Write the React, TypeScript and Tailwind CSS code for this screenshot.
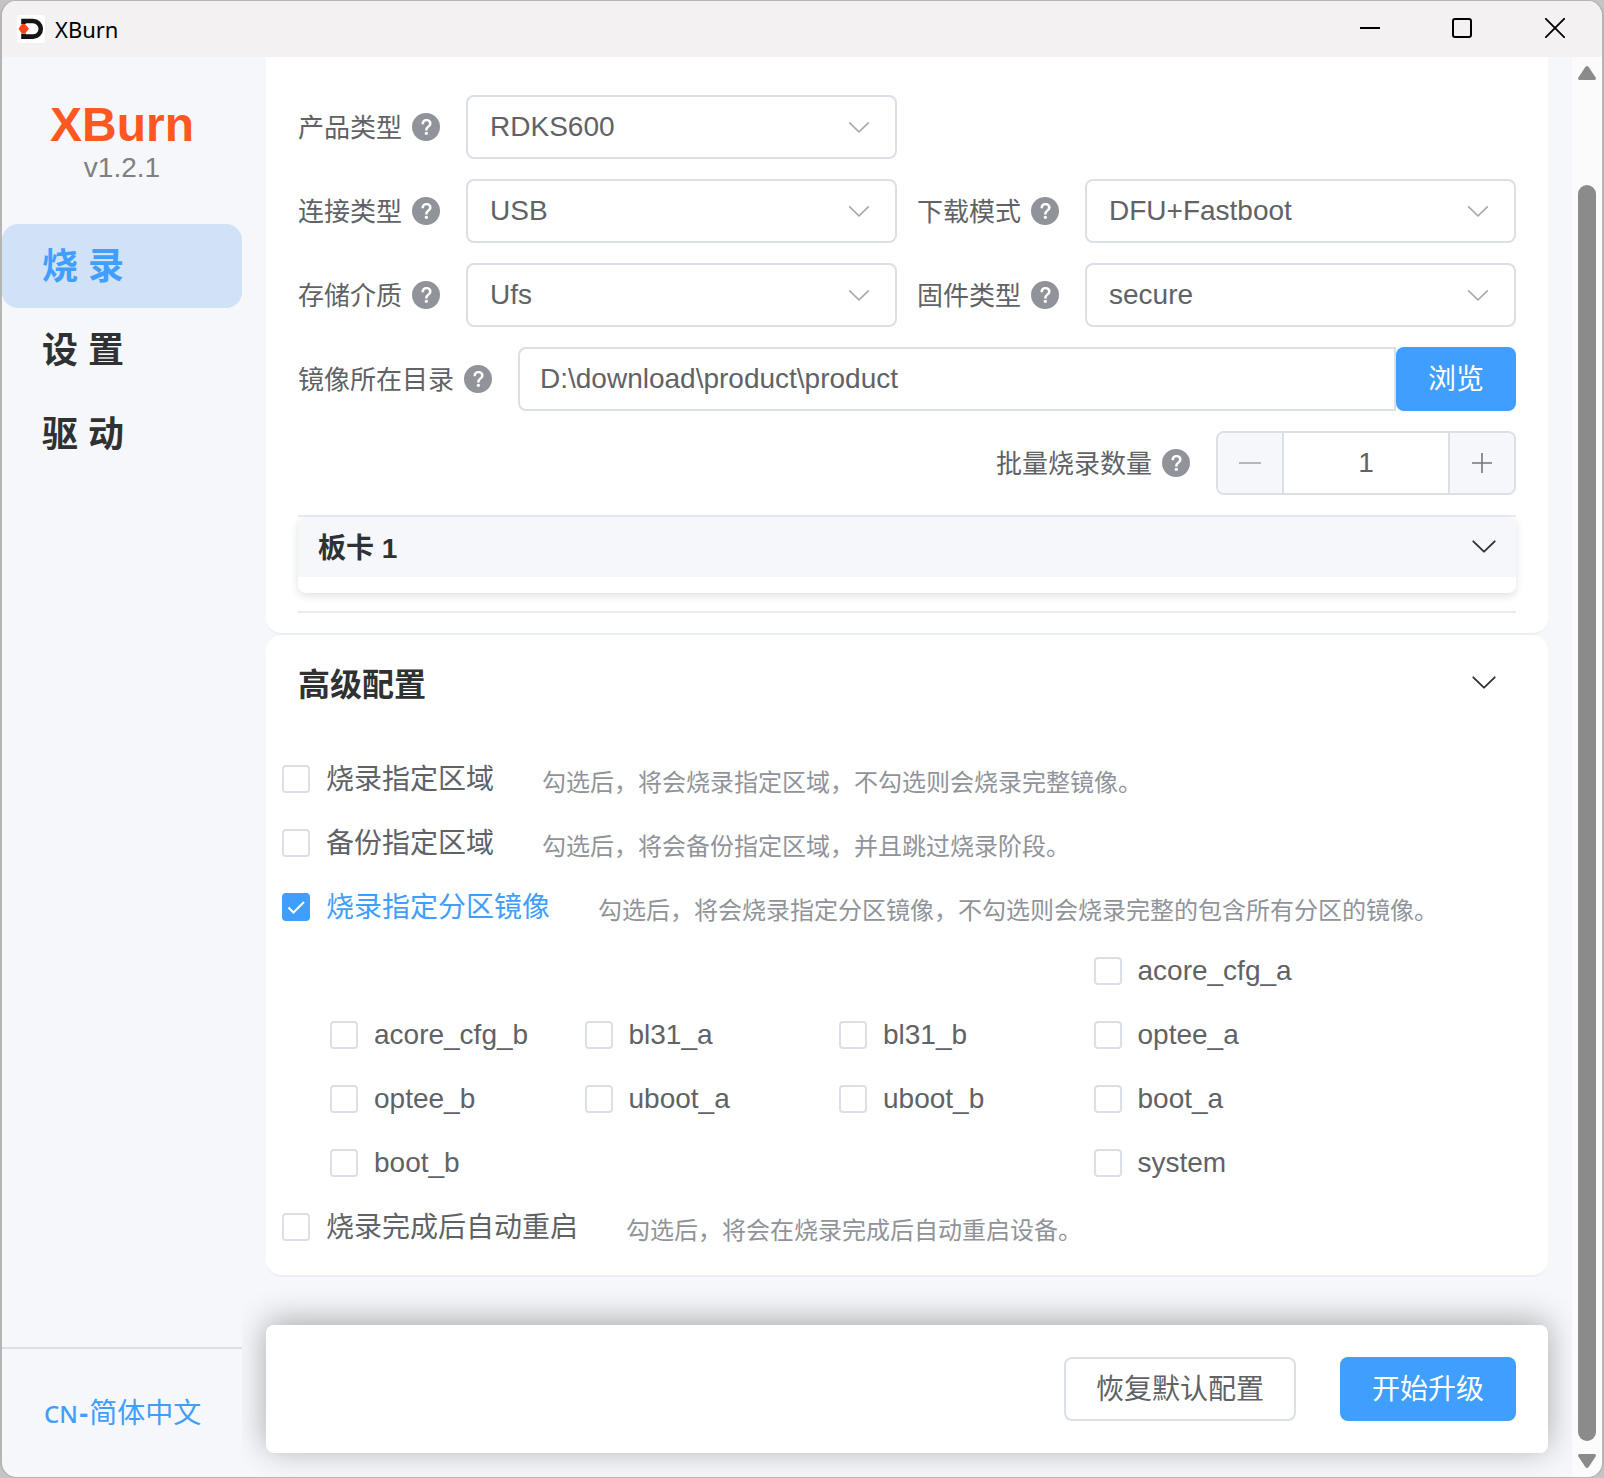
import { useState } from 'react'

const chevronPath =
    'M831.872 340.864 512 652.672 192.128 340.864a30.592 30.592 0 0 0-42.752 0 29.12 29.12 0 0 0 0 41.6L489.664 714.24a32 32 0 0 0 44.672 0l340.288-331.712a29.12 29.12 0 0 0 0-41.728 30.592 30.592 0 0 0-42.752 0z'
const questionPath =
    'M512 64a448 448 0 1 1 0 896 448 448 0 0 1 0-896zm23.744 191.488c-52.096 0-92.928 14.784-123.2 44.352-30.976 29.568-45.76 70.4-45.76 122.496h80.256c0-29.568 5.632-52.8 17.6-68.992 13.376-19.712 35.2-28.864 66.176-28.864 23.936 0 42.944 6.336 56.32 19.712 12.672 13.376 19.712 31.68 19.712 54.912 0 17.6-6.336 34.496-19.008 49.984l-8.448 9.856c-45.76 40.832-73.216 70.4-82.368 89.408-9.856 19.008-14.08 42.24-14.08 68.992v9.856h80.96v-9.856c0-16.896 3.52-31.68 10.56-45.76 6.336-12.672 15.488-24.64 28.16-35.2 33.792-29.568 54.208-48.576 60.544-55.616 16.896-22.528 26.048-51.392 26.048-86.592 0-42.944-14.08-76.736-42.24-101.376-28.16-25.344-65.472-37.312-111.232-37.312zm-12.672 406.208a54.272 54.272 0 0 0-38.72 14.784 49.408 49.408 0 0 0-15.488 38.016c0 15.488 4.928 28.16 15.488 38.016A54.848 54.848 0 0 0 523.072 768c15.488 0 28.16-4.928 38.72-14.784a51.52 51.52 0 0 0 16.192-38.72 51.968 51.968 0 0 0-15.488-38.016 55.936 55.936 0 0 0-39.424-14.784z'

function Chevron({ className }: { className: string }) {
    return (
        <svg viewBox="0 0 1024 1024" fill="currentColor" className={className} aria-hidden="true">
            <path d={chevronPath} />
        </svg>
    )
}

function FieldLabel({ id, text }: { id: string, text: string }) {
    return (
        <div className="flex shrink-0 items-center gap-2 pr-6">
            <label htmlFor={id} className="whitespace-nowrap pt-0.5 text-[26px] leading-8">{text}</label>
            <svg viewBox="0 0 1024 1024" fill="currentColor" className="size-8 text-[#909399]" aria-hidden="true">
                <path d={questionPath} />
            </svg>
        </div>
    )
}

function SelectField({ id, label, options }: { id: string, label: string, options: string[] }) {
    return (
        <div className="flex items-center">
            <FieldLabel id={id} text={label} />
            <div className="relative min-w-0 flex-1">
                <select
                    id={id}
                    className="block h-16 w-full appearance-none rounded-lg border-2 border-[#dcdfe6] bg-white pl-[22px] pr-16 text-[28px] leading-8 outline-none"
                >
                    {options.map(o => <option key={o}>{o}</option>)}
                </select>
                <Chevron className="pointer-events-none absolute right-6 top-1/2 size-7 -translate-y-1/2 text-[#a8abb2]" />
            </div>
        </div>
    )
}

function Check({ label, hint, defaultChecked = false }: { label: string, hint?: string, defaultChecked?: boolean }) {
    const [checked, setChecked] = useState(defaultChecked)
    return (
        <div className="flex h-16 items-center gap-12">
            <label className={`flex items-center gap-4 whitespace-nowrap text-[28px] leading-8 ${checked ? 'text-[#409eff]' : ''}`}>
                <span className="relative size-7 shrink-0">
                    <input
                        type="checkbox"
                        checked={checked}
                        onChange={e => setChecked(e.target.checked)}
                        className="block size-7 appearance-none rounded-sm border-2 border-[#dcdfe6] bg-white checked:border-[#409eff] checked:bg-[#409eff]"
                    />
                    {checked && (
                        <svg viewBox="0 0 28 28" fill="none" stroke="#fff" strokeWidth="2" className="pointer-events-none absolute inset-0 size-7" aria-hidden="true">
                            <path d="M6.500 14.500l5 5 10.500-10.500" />
                        </svg>
                    )}
                </span>
                <span className={hint ? 'pt-0.5' : ''}>{label}</span>
            </label>
            {hint && <span className="whitespace-nowrap pt-2 text-2xl text-[#909399]">{hint}</span>}
        </div>
    )
}

// null keeps a cell of the grid free
const partitions = [
    null, null, null, 'acore_cfg_a',
    'acore_cfg_b', 'bl31_a', 'bl31_b', 'optee_a',
    'optee_b', 'uboot_a', 'uboot_b', 'boot_a',
    'boot_b', null, null, 'system',
]

const navItems = ['烧 录', '设 置', '驱 动']

function TitleBar() {
    return (
        <header className="flex h-14 shrink-0 items-center bg-[#f4f1f3] pl-[15px] text-black">
            <svg viewBox="0 0 28 28" className="size-7" aria-hidden="true">
                <rect width="28" height="28" rx="3" fill="#fff" />
                <path d="M6.500 9V6H16a7.800 7.800 0 0 1 0 15.600H6.500V18.500" fill="none" stroke="#151515" strokeWidth="4.600" />
                <circle cx="6.500" cy="13.800" r="4.600" fill="#fff" />
                <path d="M1.500 13.800l3-4.300q2-1.500 4 0l3.500 4.300-3.500 4.300q-2 1.500-4 0z" fill="#ff4314" />
            </svg>
            <h1 className="ml-2.5 flex-1 font-['Noto_Sans',sans-serif] text-[22px] leading-8">XBurn</h1>
            <button aria-label="最小化" className="flex h-14 w-[92px] items-center justify-center pb-0.5">
                <svg viewBox="0 0 20 20" className="size-5" stroke="currentColor" strokeWidth="2"><path d="M0 10h20" /></svg>
            </button>
            <button aria-label="最大化" className="flex h-14 w-[92px] items-center justify-center pb-0.5">
                <svg viewBox="0 0 20 20" className="size-5" fill="none" stroke="currentColor" strokeWidth="2"><rect x="1" y="1" width="18" height="18" rx="2" /></svg>
            </button>
            <button aria-label="关闭" className="flex h-14 w-[94px] items-center justify-center pb-0.5">
                <svg viewBox="0 0 20 20" className="size-5" stroke="currentColor" strokeWidth="1.800"><path d="M0 0l20 20M20 0L0 20" /></svg>
            </button>
        </header>
    )
}

function Sidebar() {
    const [active, setActive] = useState(0)
    return (
        <aside className="flex w-60 shrink-0 flex-col">
            <div className="flex flex-col items-center pb-[39px] pt-[42px]">
                <div className="text-5xl font-bold leading-[52px] text-[#ff5722]">XBurn</div>
                <div className="text-[28px] leading-[34px] text-[#808080]">v1.2.1</div>
            </div>
            <nav>
                {navItems.map((item, i) => (
                    <button
                        key={item}
                        onClick={() => setActive(i)}
                        className={`block h-[84px] w-full rounded-2xl pl-10 pt-0.5 text-left text-4xl font-bold ${i === active ? 'bg-[#d1e1f6] text-[#409eff]' : 'text-[#303133]'}`}
                    >
                        {item}
                    </button>
                ))}
            </nav>
            <div className="mt-auto flex h-[130px] items-center border-t-2 border-[#dcdfe6] pl-[42px] pt-0.5">
                <a href="#lang" className="flex items-baseline text-[28px] leading-8 text-[#409eff]">
                    <span className="font-['Noto_Sans',sans-serif] text-2xl font-medium">CN</span>
                    <span className="px-px font-bold">-</span>
                    <span>简体中文</span>
                </a>
            </div>
        </aside>
    )
}

function ScrollTrack() {
    return (
        <div className="flex w-[30px] shrink-0 flex-col items-center bg-[#fbfbfb] pb-2 pt-2 text-[#8b8b8b]" aria-hidden="true">
            <svg viewBox="0 0 18 16" className="h-4 w-[18px]" fill="currentColor">
                <path d="M7.200 2.200q1.800-2.400 3.600 0l6.700 10q1.300 2.800-1.500 2.800H2q-2.800 0-1.500-2.800z" />
            </svg>
            <div className="mb-3 mt-[104px] w-[18px] flex-1 rounded-full bg-[#8b8b8b]" />
            <svg viewBox="0 0 18 16" className="h-4 w-[18px]" fill="currentColor">
                <path d="M7.200 13.800q1.800 2.400 3.600 0l6.700-10q1.300-2.800-1.500-2.800H2q-2.800 0-1.500 2.800z" />
            </svg>
        </div>
    )
}

export default function App() {
    const [count, setCount] = useState(1)
    const [dir, setDir] = useState('D:\\download\\product\\product')

    return (
        <div className="min-h-screen bg-[#c4c4c4]">
            <div className="flex min-h-screen flex-col overflow-hidden rounded-2xl border-x-2 border-y border-[#b5b5b5] bg-[#f5f7fa] font-['Liberation_Sans','Noto_Sans_CJK_SC',sans-serif] text-[#606266]">
                <TitleBar />
                <div className="flex flex-1">
                    <Sidebar />
                    <main className="flex min-w-0 flex-1 flex-col overflow-hidden px-6 pb-6">
                        <section className="rounded-b-2xl border-b-2 border-[#ebeef5] bg-white px-8 pb-5 pt-[38px]">
                            <div className="grid grid-cols-2 gap-5">
                                <SelectField id="product" label="产品类型" options={['RDKS600']} />
                                <div />
                                <SelectField id="connection" label="连接类型" options={['USB']} />
                                <SelectField id="mode" label="下载模式" options={['DFU+Fastboot']} />
                                <SelectField id="storage" label="存储介质" options={['Ufs']} />
                                <SelectField id="firmware" label="固件类型" options={['secure']} />
                                <div className="col-span-2 flex items-center">
                                    <FieldLabel id="dir" text="镜像所在目录" />
                                    <input
                                        id="dir"
                                        value={dir}
                                        onChange={e => setDir(e.target.value)}
                                        className="h-16 min-w-0 flex-1 rounded-l-lg border-2 border-[#dcdfe6] bg-white pl-5 text-[28px] leading-8 outline-none"
                                    />
                                    <button className="h-16 w-[120px] rounded-lg bg-[#409eff] pt-0.5 text-[28px] leading-8 text-white">浏览</button>
                                </div>
                                <div className="col-span-2 flex items-center justify-end">
                                    <FieldLabel id="count" text="批量烧录数量" />
                                    <div className="flex h-16 w-[300px] overflow-hidden rounded-lg border-2 border-[#dcdfe6]">
                                        <button
                                            aria-label="减少"
                                            onClick={() => setCount(Math.max(1, count - 1))}
                                            className="flex w-[66px] items-center justify-center border-r-2 border-[#dcdfe6] bg-[#f5f7fa] text-[#b4b7bd]"
                                        >
                                            <svg viewBox="0 0 22 22" className="size-[22px]" stroke="currentColor" strokeWidth="2"><path d="M0 11h22" /></svg>
                                        </button>
                                        <input
                                            id="count"
                                            value={count}
                                            onChange={e => setCount(Number(e.target.value) || 1)}
                                            className="min-w-0 flex-1 bg-white text-center text-[28px] leading-8 outline-none"
                                        />
                                        <button
                                            aria-label="增加"
                                            onClick={() => setCount(count + 1)}
                                            className="flex w-[66px] items-center justify-center border-l-2 border-[#dcdfe6] bg-[#f5f7fa] text-[#73767a]"
                                        >
                                            <svg viewBox="0 0 22 22" className="size-[22px]" stroke="currentColor" strokeWidth="1.600"><path d="M1 11h20M11 1v20" /></svg>
                                        </button>
                                    </div>
                                </div>
                            </div>

                            <div className="mt-5 border-y-2 border-[#e8ebf1] pb-[18px]">
                                <div className="rounded-lg bg-white pb-4 shadow-[0_3px_8px_rgba(0,0,0,0.12)]">
                                    <button className="flex h-[60px] w-full items-center justify-between rounded-t-lg bg-[#f5f7fa] pb-0.5 pl-5 pr-4 text-[28px] font-bold leading-8 text-[#303133]">
                                        <span className="pt-1.5">板卡 1</span>
                                        <Chevron className="size-8" />
                                    </button>
                                </div>
                            </div>
                        </section>

                        <section className="rounded-2xl border-b-2 border-[#ebeef5] bg-white px-4 pb-4">
                            <button className="flex h-24 w-full items-center justify-between pb-0.5 pl-4 pr-8 text-[32px] font-bold leading-10 text-[#303133]">
                                <span className="pt-1.5">高级配置</span>
                                <Chevron className="size-8" />
                            </button>
                            <div className="pt-4">
                                <Check label="烧录指定区域" hint="勾选后，将会烧录指定区域，不勾选则会烧录完整镜像。" />
                                <Check label="备份指定区域" hint="勾选后，将会备份指定区域，并且跳过烧录阶段。" />
                                <Check label="烧录指定分区镜像" hint="勾选后，将会烧录指定分区镜像，不勾选则会烧录完整的包含所有分区的镜像。" defaultChecked />
                                <div className="ml-12 mr-46 grid grid-cols-4">
                                    {partitions.map((name, i) => name ? <Check key={name} label={name} /> : <div key={i} />)}
                                </div>
                                <Check label="烧录完成后自动重启" hint="勾选后，将会在烧录完成后自动重启设备。" />
                            </div>
                        </section>

                        <div className="mt-auto pt-12">
                            <footer className="flex h-32 items-center justify-end gap-11 rounded-lg bg-white px-8 shadow-[0_-4px_32px_rgba(0,0,0,0.32)]">
                                <button className="h-16 rounded-lg border-2 border-[#dcdfe6] px-[30px] pt-0.5 text-[28px] leading-8">恢复默认配置</button>
                                <button className="h-16 rounded-lg bg-[#409eff] px-8 pt-0.5 text-[28px] leading-8 text-white">开始升级</button>
                            </footer>
                        </div>
                    </main>
                    <ScrollTrack />
                </div>
            </div>
        </div>
    )
}
